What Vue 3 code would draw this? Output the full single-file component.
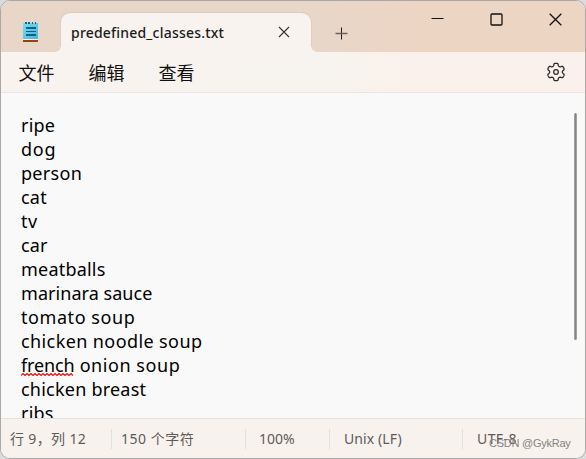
<script setup>
const menus = ['文件', '编辑', '查看']
const lines = [
  { text: 'ripe', tracking: 0.2 },
  { text: 'dog', tracking: 0.8 },
  { text: 'person', tracking: 0.3 },
  { text: 'cat', tracking: 0.2 },
  { text: 'tv', tracking: 0.4 },
  { text: 'car', tracking: 0.1 },
  { text: 'meatballs', tracking: 0.2 },
  { text: 'marinara sauce', tracking: 0.05 },
  { text: 'tomato soup', tracking: 0.57 },
  { text: 'chicken noodle soup', tracking: 0.4 },
  { typo: 'french', text: ' onion soup', tracking: 0.56 },
  { text: 'chicken breast', tracking: 0.22 },
  { text: 'ribs', tracking: 0.2 },
]

// Outline of a six-toothed gear, one tooth pointing straight up.
const gear = Array.from({ length: 120 }, (_, i) => {
  const a = (i / 120) * Math.PI * 2
  const r = 7.5 + 1.2 * Math.tanh(2.2 * Math.cos(6 * a) + 0.5)
  return `${(10 + r * Math.sin(a)).toFixed(2)},${(10 - r * Math.cos(a)).toFixed(2)}`
}).join(' ')
</script>

<template>
  <div class="backdrop">
    <div class="window">
      <header class="titlebar">
        <svg class="app-icon" width="15" height="21" viewBox="0 0 15 21" shape-rendering="crispEdges">
          <defs>
            <linearGradient id="pad" x1="0" y1="0" x2="1" y2="1">
              <stop offset="0" stop-color="#7cdcf1" />
              <stop offset="1" stop-color="#45b6d9" />
            </linearGradient>
          </defs>
          <rect x="0" y="17" width="15" height="1" fill="#f4f7f5" />
          <rect x="0" y="18" width="15" height="2" fill="#96430d" />
          <rect x="0" y="1" width="15" height="16" fill="url(#pad)" />
          <path d="M2 0h2v2h-2zM5 0h2v2h-2zM9 0h1v2h-1zM12 0h1v2h-1z" fill="#126587" />
          <path d="M3 5h10v2h-10zM3 9h10v1h-10zM3 12h10v2h-10z" fill="#07658b" />
        </svg>
        <div class="tab">
          <span class="tab-title">predefined_classes.txt</span>
          <svg class="tab-close" width="12" height="12" viewBox="0 0 12 12">
            <path d="M1 1l10 10M11 1L1 11" />
          </svg>
        </div>
        <svg class="new-tab" width="13" height="13" viewBox="0 0 13 13">
          <path d="M6.5 0.5v12" stroke="#1b1b1b" />
          <path d="M0.5 6.5h12" stroke="#6f625b" stroke-width="1.3" />
        </svg>
        <div class="controls">
          <svg width="13" height="13" viewBox="0 0 13 13"><path d="M0.5 5.5h12" stroke-width="1" /></svg>
          <svg width="13" height="13" viewBox="0 0 13 13"><rect x="1" y="1" width="11" height="11" rx="1" /></svg>
          <svg width="13" height="13" viewBox="0 0 13 13"><path d="M0.7 0.7l11.6 11.6M12.3 0.7L0.7 12.3" /></svg>
        </div>
      </header>

      <nav class="menubar">
        <span v-for="m in menus" :key="m" class="menu">{{ m }}</span>
        <svg class="gear" width="20" height="20" viewBox="0 0 20 20">
          <polygon :points="gear" />
          <circle cx="10" cy="10" r="2.3" />
        </svg>
      </nav>

      <main class="editor">
        <div class="text">
          <div v-for="(l, i) in lines" :key="i" class="line" :style="{ letterSpacing: l.tracking + 'px' }"><span v-if="l.typo" class="typo">{{ l.typo }}<svg class="squiggle" width="53" height="3" viewBox="0 0 53 3"><path d="M0 2.500L2 .5l2 2 2-2 2 2 2-2 2 2 2-2 2 2 2-2 2 2 2-2 2 2 2-2 2 2 2-2 2 2 2-2 2 2 2-2 2 2 2-2 2 2 2-2 2 2 2-2 2 2" /></svg></span>{{ l.text }}</div>
        </div>
        <div class="thumb"></div>
      </main>

      <footer class="status">
        <span class="cell position">行 9，列 12</span>
        <span class="cell count">150 个字符</span>
        <span class="cell zoom">100%</span>
        <span class="cell eol">Unix (LF)</span>
        <span class="cell encoding">UTF-8</span>
      </footer>
    </div>
    <span class="watermark">CSDN @GykRay</span>
  </div>
</template>

<style>
body { margin: 0; overflow: hidden; }
</style>

<style scoped>
.backdrop {
  position: relative;
  box-sizing: border-box;
  width: 586px;
  height: 459px;
  background: #dcdcdc;
  font-family: "Noto Sans", "Noto Sans CJK SC", sans-serif;
}
.window {
  box-sizing: border-box;
  width: 586px;
  height: 459px;
  border: 1px solid #aaa9a8;
  border-radius: 10px;
  overflow: hidden;
  display: flex;
  flex-direction: column;
  background: #f9f9f9;
}
.titlebar {
  flex: none;
  height: 51px;
  overflow: hidden;
  display: flex;
  align-items: flex-start;
  background: linear-gradient(90deg, #e8d6c8 0, #e8d6c8 330px, #edd5c4 420px);
}
.app-icon { flex: none; margin: 21px 0 0 22px; }
.tab {
  position: relative;
  box-sizing: border-box;
  flex: none;
  width: 250px;
  height: 39px;
  margin: 12px 0 0 23px;
  padding: 0 21px 0 10px;
  display: flex;
  align-items: center;
  justify-content: space-between;
  background: #f8f3ef;
  border-radius: 9px 9px 0 0;
  box-shadow: 0 -1px 0 #dfc9bb, 0 0 0 1px #e2cdbf;
}
.tab::before, .tab::after {
  content: "";
  position: absolute;
  bottom: 0;
  width: 5px;
  height: 5px;
}
.tab::before { left: -5px; background: radial-gradient(circle at 0 0, #e8d6c8 4px, #f8f3ef 5px); }
.tab::after { right: -5px; background: radial-gradient(circle at 100% 0, #e8d6c8 4px, #f8f3ef 5px); }
.tab-title { font-size: 14px; line-height: 20px; font-weight: 500; letter-spacing: 0.2px; color: #1b1b1b; white-space: nowrap; }
.tab-close { fill: none; stroke: #333; stroke-width: 1.1; margin-bottom: 1px; }
.new-tab { flex: none; margin: 26px 0 0 24px; fill: none; }
.controls {
  display: flex;
  gap: 46px;
  margin: 12px 0 0 83px;
  fill: none;
  stroke: #111;
  stroke-width: 1.3;
}
.controls svg { flex: none; }
.menubar {
  box-sizing: border-box;
  flex: none;
  height: 41px;
  display: flex;
  align-items: center;
  gap: 34px;
  padding: 0 19px 0 17.5px;
  background: linear-gradient(90deg, #f8f3ef 0, #f7f3ee 340px, #faf1ec 400px);
  border-bottom: 1px solid #ebe4df;
}
.menu {
  font-family: "Noto Sans CJK SC", sans-serif;
  font-size: 18px;
  line-height: 24px;
  color: #101010;
}
.gear { margin-left: auto; fill: none; stroke: #2b2b2b; stroke-width: 1.3; stroke-linejoin: round; }
.editor {
  flex: 1;
  min-height: 0;
  overflow: hidden;
  display: flex;
  justify-content: space-between;
}
.text { padding: 20px 0 0 20px; }
.line {
  height: 24px;
  line-height: 24px;
  font-size: 18px;
  color: #000;
  white-space: pre;
}
.typo { position: relative; letter-spacing: -0.15px; }
.squiggle {
  position: absolute;
  left: 0;
  bottom: 1px;
  fill: none;
  stroke: #f01010;
  stroke-width: 1.2;
}
.thumb {
  flex: none;
  width: 3px;
  height: 227px;
  margin: 20px 8px 0 0;
  border-radius: 2px;
  background: linear-gradient(90deg, #b0b0b0, #858585, #b0b0b0);
}
.status {
  box-sizing: border-box;
  flex: none;
  height: 40px;
  display: flex;
  align-items: center;
  background: #f7f2ee;
  border-top: 1px solid #e5e1dd;
  color: #5e5b59;
  font-size: 14px;
}
.cell {
  box-sizing: border-box;
  flex: none;
  height: 20px;
  line-height: 20px;
  padding-left: 14px;
  white-space: nowrap;
  border-left: 1px solid #e5e0dc;
}
.position { width: 110px; padding-left: 9px; border-left: 0; letter-spacing: 0.35px; }
.count { width: 134px; padding-left: 9px; letter-spacing: 0.5px; }
.zoom { width: 84px; padding-left: 13px; }
.eol { width: 133px; letter-spacing: 0.1px; }
.encoding { letter-spacing: 0.4px; }
.watermark {
  position: absolute;
  left: 489px;
  top: 435px;
  font-family: "Liberation Sans", sans-serif;
  font-size: 11px;
  line-height: 16px;
  letter-spacing: -0.25px;
  color: #858381;
  white-space: nowrap;
}
</style>
